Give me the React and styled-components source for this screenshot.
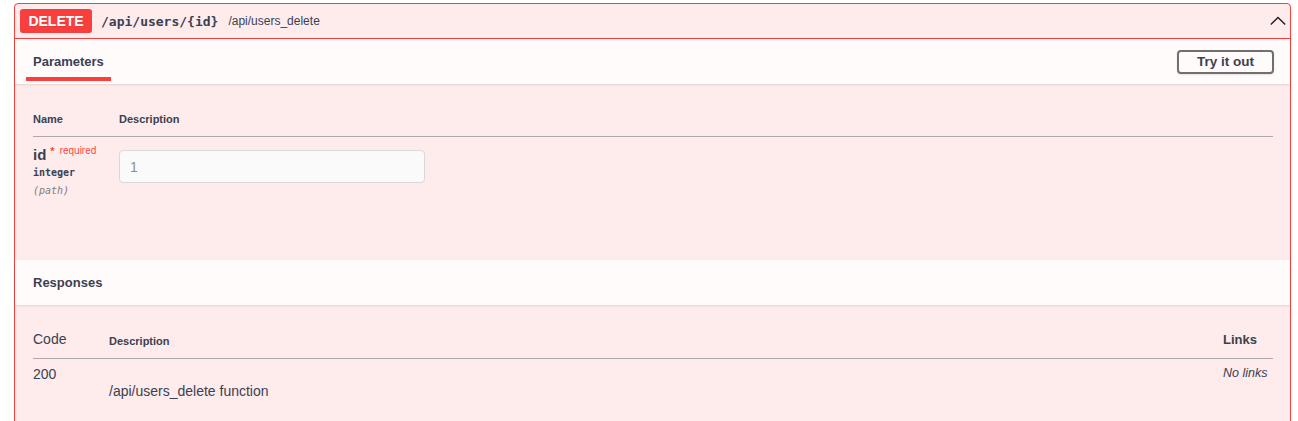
import React from 'react';
import styled, { createGlobalStyle } from 'styled-components';

const GlobalStyle = createGlobalStyle`
  html, body {
    margin: 0;
    padding: 0;
    background: #fff;
  }
  body {
    font-family: "Liberation Sans", Arial, sans-serif;
    color: #3b4151;
  }
`;

const Page = styled.div`
  padding: 3px 7px 0 14px;
  height: 421px;
  overflow: hidden;
  box-sizing: border-box;
`;

const Opblock = styled.div`
  border: 1px solid #f93e3e;
  border-radius: 4px;
  background: rgba(249, 62, 62, 0.1);
  min-height: 460px;
`;

const Summary = styled.div`
  display: flex;
  align-items: center;
  padding: 5px;
  border-bottom: 1px solid #f93e3e;
`;

const Method = styled.span`
  display: inline-flex;
  align-items: center;
  justify-content: center;
  width: 72px;
  height: 24px;
  border-radius: 3px;
  background: #f93e3e;
  color: #fff;
  font-size: 14px;
  font-weight: 700;
  text-shadow: 0 1px 0 rgba(0, 0, 0, 0.1);
`;

const Path = styled.span`
  margin-left: 9px;
  font-family: "DejaVu Sans Mono", monospace;
  font-size: 13px;
  font-weight: 700;
  color: #3b4151;
`;

const SummaryDesc = styled.span`
  margin-left: 10px;
  font-size: 12px;
  color: #3b4151;
  flex: 1;
`;

const Chevron = styled.svg`
  width: 18px;
  height: 18px;
  margin-right: -2px;
`;

const SectionHeader = styled.div`
  display: flex;
  align-items: center;
  justify-content: space-between;
  height: 45px;
  padding: 0 16px 0 11px;
  background: rgba(255, 255, 255, 0.8);
  box-shadow: 0 1px 2px rgba(0, 0, 0, 0.1);
`;

const Tab = styled.div`
  position: relative;
  align-self: stretch;
  display: flex;
  align-items: center;
  padding: 0 7px;
  font-size: 13px;
  font-weight: 700;
  color: #3b4151;

  &::after {
    content: '';
    position: absolute;
    left: 0;
    right: 0;
    bottom: 3px;
    height: 4px;
    background: #f93e3e;
  }
`;

const PlainTitle = styled.div`
  padding-left: 7px;
  font-size: 13px;
  font-weight: 700;
  color: #3b4151;
`;

const TryButton = styled.button`
  width: 97px;
  height: 24px;
  border: 2px solid #707070;
  border-radius: 4px;
  background: transparent;
  font-family: "Liberation Sans", Arial, sans-serif;
  font-size: 13.5px;
  font-weight: 700;
  color: #3b4151;
  cursor: pointer;
  box-shadow: 0 1px 2px rgba(0, 0, 0, 0.1);
`;

const Section = styled.div`
  padding: ${(p) => p.pad};
  height: ${(p) => p.h}px;
  box-sizing: border-box;
`;

const TableHead = styled.div`
  display: grid;
  grid-template-columns: ${(p) => p.cols};
  align-items: end;
  padding-bottom: ${(p) => p.pb}px;
  border-bottom: 1px solid rgba(59, 65, 81, 0.4);
`;

const HeadCell = styled.div`
  font-size: ${(p) => p.size || 12}px;
  font-weight: ${(p) => (p.regular ? 400 : 700)};
  color: #3b4151;
`;

const Row = styled.div`
  display: grid;
  grid-template-columns: ${(p) => p.cols};
  align-items: start;
  padding-top: ${(p) => p.pt}px;
`;

const ParamName = styled.div`
  display: flex;
  flex-direction: column;
`;

const NameLine = styled.div`
  font-size: 15px;
  font-weight: 700;
  color: #3b4151;
  line-height: 18px;
`;

const Star = styled.span`
  color: rgba(255, 0, 0, 0.75);
  font-size: 11px;
  position: relative;
  top: -5px;
  margin-left: 4px;
`;

const Required = styled.span`
  color: rgba(255, 0, 0, 0.75);
  font-size: 10px;
  font-weight: 400;
  position: relative;
  top: -6px;
  margin-left: 5px;
`;

const Mono = styled.div`
  font-family: "DejaVu Sans Mono", monospace;
  font-size: 10px;
  font-weight: ${(p) => (p.italic ? 400 : 600)};
  font-style: ${(p) => (p.italic ? 'italic' : 'normal')};
  color: ${(p) => (p.italic ? '#808080' : '#3b4151')};
  margin-top: ${(p) => p.mt}px;
  line-height: 14px;
`;

const Input = styled.input`
  width: 306px;
  height: 33px;
  box-sizing: border-box;
  margin-top: 4px;
  padding: 0 10px;
  border: 1px solid #d9d9d9;
  border-radius: 4px;
  background: #fafafa;
  font-family: "Liberation Sans", Arial, sans-serif;
  font-size: 14px;
  color: #3b4151;

  &::placeholder {
    color: #8e8e8e;
  }
`;

const Cell = styled.div`
  font-size: ${(p) => p.size || 14}px;
  color: #3b4151;
  font-style: ${(p) => (p.italic ? 'italic' : 'normal')};
  padding-top: ${(p) => p.pt || 0}px;
`;

export default function App() {
  const respCols = '76px 1fr 50px';
  return (
    <>
      <GlobalStyle />
      <Page>
        <Opblock>
          <Summary>
            <Method>DELETE</Method>
            <Path>/api/users/{'{id}'}</Path>
            <SummaryDesc>/api/users_delete</SummaryDesc>
            <Chevron viewBox="0 0 20 20">
              <path d="M2 14 L10 6 L18 14" fill="none" stroke="#222" strokeWidth="1.6" />
            </Chevron>
          </Summary>

          <SectionHeader>
            <Tab>Parameters</Tab>
            <TryButton>Try it out</TryButton>
          </SectionHeader>

          <Section pad="29px 17px 0 18px" h={176}>
            <TableHead cols="86px 1fr" pb={11}>
              <HeadCell size={11}>Name</HeadCell>
              <HeadCell size={11}>Description</HeadCell>
            </TableHead>
            <Row cols="86px 1fr" pt={9}>
              <ParamName>
                <NameLine>
                  id<Star>*</Star>
                  <Required>required</Required>
                </NameLine>
                <Mono mt={0}>integer</Mono>
                <Mono italic mt={4}>(path)</Mono>
              </ParamName>
              <Input placeholder="1" />
            </Row>
          </Section>

          <SectionHeader>
            <PlainTitle>Responses</PlainTitle>
          </SectionHeader>

          <Section pad="26px 17px 0 18px" h={200}>
            <TableHead cols={respCols} pb={11}>
              <HeadCell size={14} regular>Code</HeadCell>
              <HeadCell size={11}>Description</HeadCell>
              <HeadCell size={13}>Links</HeadCell>
            </TableHead>
            <Row cols={respCols} pt={7}>
              <Cell>200</Cell>
              <Cell pt={17}>/api/users_delete function</Cell>
              <Cell italic size={12.5}>No links</Cell>
            </Row>
          </Section>
        </Opblock>
      </Page>
    </>
  );
}
